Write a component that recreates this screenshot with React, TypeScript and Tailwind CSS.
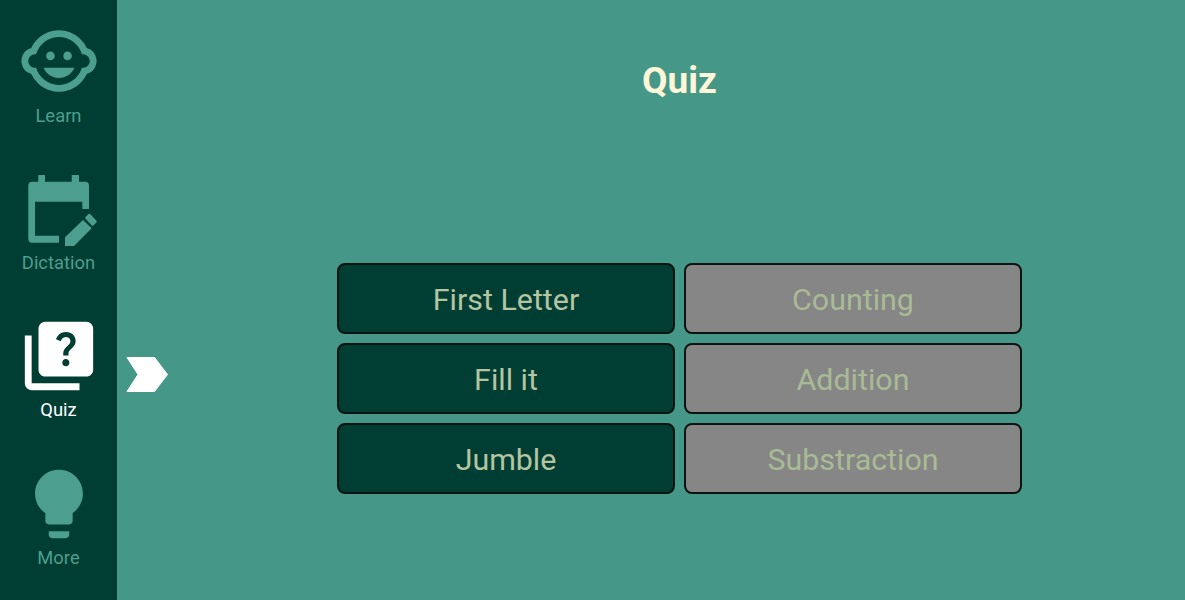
import { MdChildCare, MdLightbulb, MdQuiz } from "react-icons/md";

function CalendarPencil({ className }: { className?: string }) {
    return (
        <svg className={className} viewBox="0 0 70 72" fill="currentColor">
            <path d="M4.3 6.7H10.3V0H17V6.7H43.7V0H51V6.7H57a4 4 0 0 1 4 4V34H54.3V26.7H7V60.7H31V67.7H4.3a4 4 0 0 1-4-4V10.7a4 4 0 0 1 4-4Z" />
            <path d="M37 71V62.3L55 45L63.7 53.3L46 71Z" />
            <path
                d="M58.5 43L61.5 40L67.5 46.5L64.5 49.5Z"
                stroke="currentColor"
                strokeWidth="2.5"
                strokeLinejoin="round"
            />
        </svg>
    );
}

const navItems = [
    { label: "Learn", Icon: MdChildCare, iconClass: "mt-[20px] mb-[1px] h-[82px] w-[82px]", active: false },
    { label: "Dictation", Icon: CalendarPencil, iconClass: "mt-[28px] mb-[3px] ml-[9px] h-[72px] w-[70px]", active: false },
    { label: "Quiz", Icon: MdQuiz, iconClass: "mt-[21px] mb-0 h-[82px] w-[82px]", active: true },
    { label: "More", Icon: MdLightbulb, iconClass: "mt-[22px] mb-0 h-[82px] w-[82px]", active: false },
];

const quizButtons = [
    { label: "First Letter", enabled: true },
    { label: "Counting", enabled: false },
    { label: "Fill it", enabled: true },
    { label: "Addition", enabled: false },
    { label: "Jumble", enabled: true },
    { label: "Substraction", enabled: false },
];

export default function App() {
    return (
        <div className="relative flex h-[600px] w-[1185px] overflow-hidden bg-[#459888] font-['Roboto',sans-serif]">
            <nav className="flex w-[117px] shrink-0 flex-col bg-[#003d32]">
                {navItems.map(({ label, Icon, iconClass, active }) => (
                    <div
                        key={label}
                        className={`flex h-[147px] flex-col items-center ${active ? "text-white" : "text-[#4c9f8e]"}`}
                    >
                        <Icon className={`shrink-0 ${iconClass}`} />
                        <span className="pt-[1px] text-[18.4px] leading-[24px]">{label}</span>
                    </div>
                ))}
            </nav>

            {/* marker next to the active tab */}
            <svg className="absolute left-[126px] top-[357px] h-[35px] w-[42px]" viewBox="0 0 42 35">
                <path
                    d="M1 0.5H28.5L41.5 17.5L28.5 34.5H1L12 17.5Z"
                    fill="#ffffff"
                    stroke="#ffffff"
                    strokeLinejoin="round"
                />
            </svg>

            <main className="flex flex-1 flex-col pl-[220px] pr-[163px]">
                <h1 className="mt-[59px] text-center text-[37px] leading-[44px] font-bold text-[#fdf6d8]">Quiz</h1>
                <div className="mt-[160px] grid grid-cols-2 gap-x-[9px] gap-y-[9px]">
                    {quizButtons.map(({ label, enabled }) => (
                        <button
                            key={label}
                            className={`flex h-[71px] items-center justify-center rounded-[8px] border-2 border-[#0c1412] pt-[3px] text-[30.4px] ${
                                enabled ? "bg-[#003d32] text-[#b4c5a2]" : "bg-[#868686] text-[#a9bb95]"
                            }`}
                        >
                            {label}
                        </button>
                    ))}
                </div>
            </main>
        </div>
    );
}
